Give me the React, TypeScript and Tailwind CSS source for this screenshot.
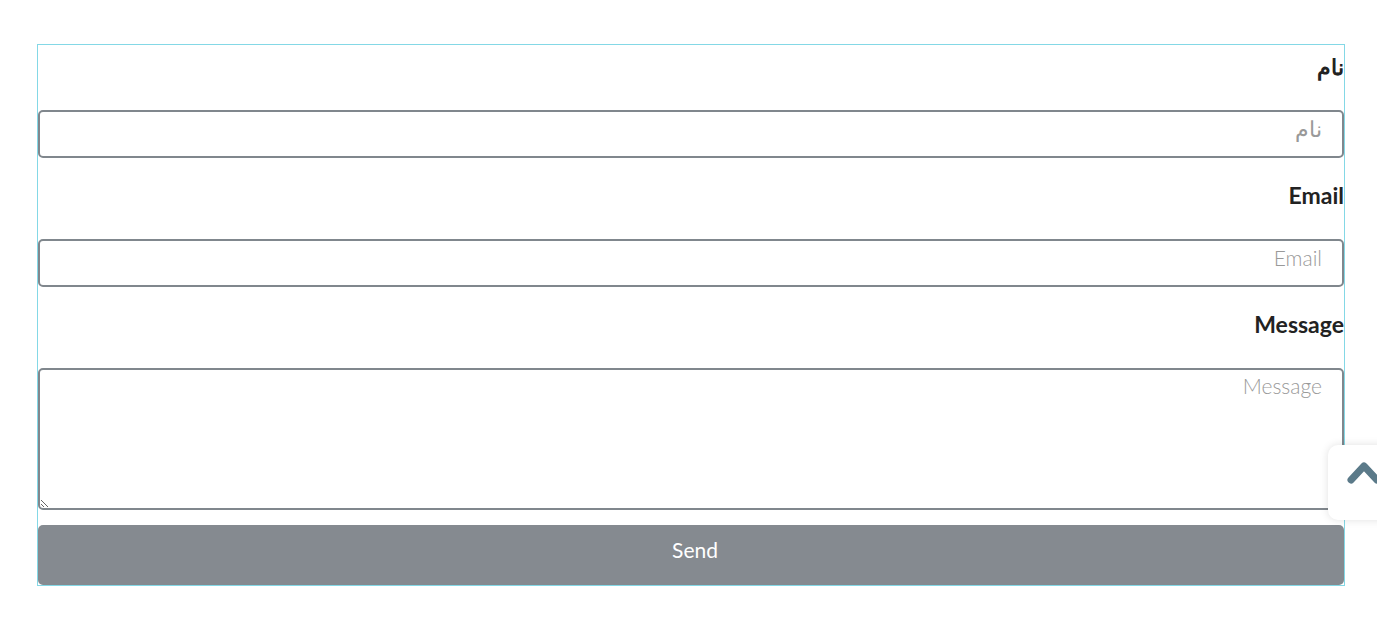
export default function App() {
  return (
    <div className="relative min-h-[636px] bg-white pt-[44px] font-['Lato','Noto_Sans',sans-serif]">
      <form
        dir="rtl"
        className="ml-[37px] flex w-[1308px] flex-col border border-[#84d8e6]"
        onSubmit={e => e.preventDefault()}
      >
        <label className="mt-[7px] block pl-[1px] text-[22px] font-bold leading-[30px] text-[#222]">نام</label>
        <input
          placeholder="نام"
          className="mt-[28px] h-[48px] w-full rounded-[5px] border-2 border-[#80878d] px-[20px] pb-[12px] text-[22px] font-light text-[#333] placeholder:text-[#999] focus:outline-none"
        />
        <label className="mt-[22px] block text-[23px] font-bold leading-[30px] text-[#222]">Email</label>
        <input
          placeholder="Email"
          className="mt-[29px] h-[48px] w-full rounded-[5px] border-2 border-[#80878d] px-[20px] pb-[12px] text-[21px] font-light text-[#333] placeholder:text-[#999] focus:outline-none"
        />
        <label className="mt-[22px] block text-[23px] font-bold leading-[30px] text-[#222]">Message</label>
        <textarea
          placeholder="Message"
          className="mt-[29px] block h-[142px] w-full rounded-[5px] border-2 border-[#80878d] px-[20px] pt-0 text-[21px] font-light text-[#333] placeholder:text-[#999] focus:outline-none"
        />
        <button
          type="submit"
          className="mt-[15px] h-[60px] w-full rounded-[5px] bg-[#858a90] pb-[10px] pl-[8px] text-[21px] text-white"
        >
          Send
        </button>
      </form>

      <button
        aria-label="Back to top"
        className="absolute left-[1328px] top-[445px] flex h-[75px] w-[60px] items-start justify-start rounded-l-[10px] bg-white pl-[18px] pt-[14px] shadow-[0_0_8px_rgba(0,0,0,0.12)]"
      >
        <svg width="36" height="28" viewBox="0 0 36 28">
          <polyline
            points="5,21 18,7 31,21"
            fill="none"
            stroke="#5b7a89"
            strokeWidth="7"
            strokeLinecap="round"
            strokeLinejoin="round"
          />
        </svg>
      </button>
    </div>
  )
}
